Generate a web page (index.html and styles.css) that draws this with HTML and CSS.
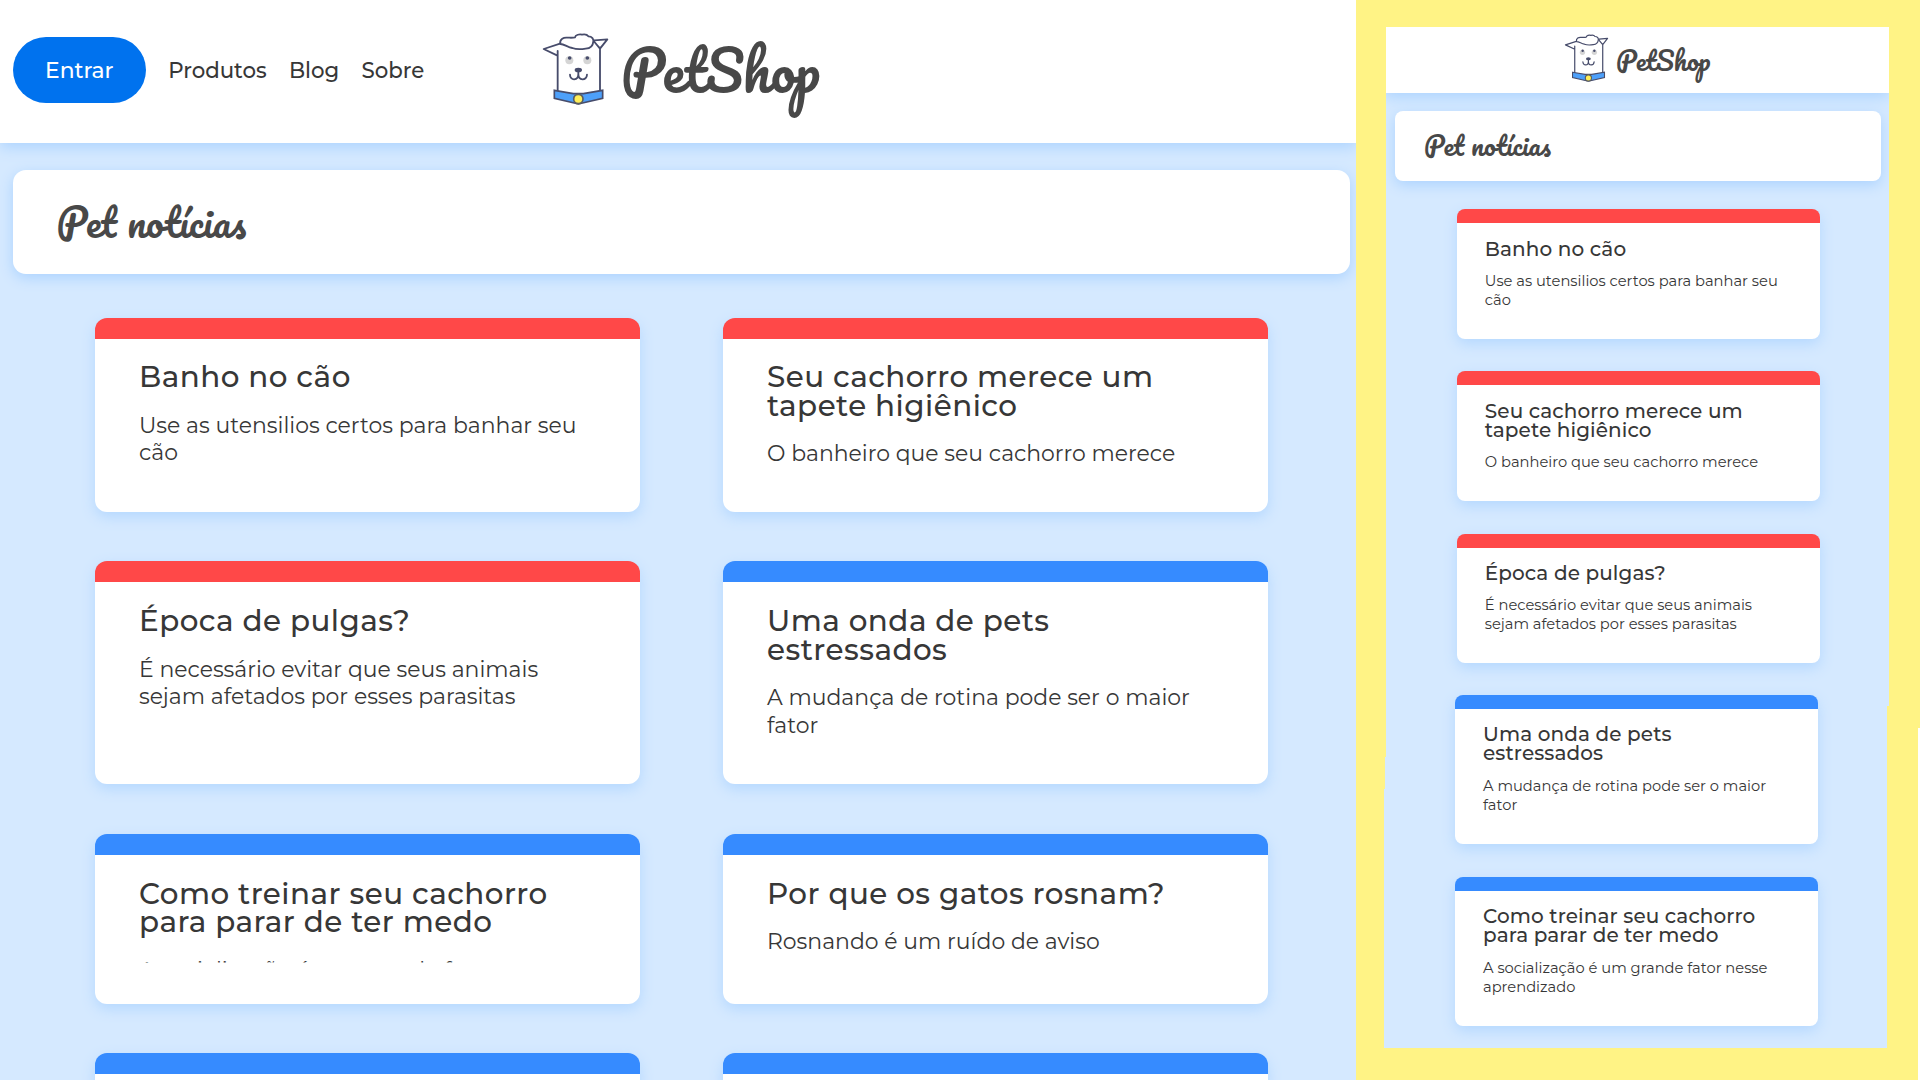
FILE: index.html
```html
<!DOCTYPE html>
<html lang="pt-BR">
<head>
<meta charset="utf-8">
<title>PetShop</title>
<link rel="stylesheet" href="styles.css">
</head>
<body>
<svg width="0" height="0" class="defs" aria-hidden="true">
  <symbol id="dog" viewBox="0 0 240 270">
    <g fill="none" stroke="#474c6b" stroke-width="5.5" stroke-linejoin="round" stroke-linecap="round">
      <path d="M53 78V198M180 67V198M60 56L11 72L51 91M163 46L202 43L180 71L161 48"/>
      <path fill="#fff" d="M61 57C58 41 72 37 82 38C90 38 99 39 105 37C106 30 119 26 126 29C136 27 143 31 145 34C157 34 161 43 160 49C159 62 151 70 137 71C124 73 107 73 97 69C83 67 73 57 61 57Z"/>
      <path d="M90 149C90 168 115 168 115 147C115 168 140 168 141 149M115 136V150"/>
    </g>
    <circle cx="88" cy="106" r="12" fill="#d5d5d5"/><circle cx="142" cy="106" r="12" fill="#d5d5d5"/>
    <circle cx="89" cy="99" r="5.5" fill="#474c6b"/><circle cx="142" cy="99" r="5.5" fill="#474c6b"/>
    <ellipse cx="115" cy="135" rx="11" ry="7" fill="#474c6b"/>
    <path d="M43 196L100 206H130L188 196V220L115 237L43 220Z" fill="#4da0fa" stroke="#474c6b" stroke-width="5" stroke-linejoin="miter"/>
    <circle cx="115" cy="222" r="14" fill="#ffee58" stroke="#5a5d60" stroke-width="5"/>
  </symbol>
</svg>
<div class="stage">
  <section class="desktop">
    <header class="top">
      <nav class="nav">
        <a class="enter">Entrar</a><a>Produtos</a><a>Blog</a><a>Sobre</a>
      </nav>
      <div class="brand"><svg class="dog"><use href="#dog"/></svg><span class="script">PetShop</span></div>
    </header>
    <h1 class="heading script">Pet notícias</h1>
    <main class="grid">
      <article class="card red"><div class="content"><h2>Banho no cão</h2><p>Use as utensilios certos para banhar seu<br>cão</p></div></article>
      <article class="card red"><div class="content"><h2>Seu cachorro merece um<br>tapete higiênico</h2><p>O banheiro que seu cachorro merece</p></div></article>
      <article class="card red"><div class="content"><h2>Época de pulgas?</h2><p>É necessário evitar que seus animais<br>sejam afetados por esses parasitas</p></div></article>
      <article class="card"><div class="content"><h2>Uma onda de pets<br>estressados</h2><p>A mudança de rotina pode ser o maior<br>fator</p></div></article>
      <article class="card"><div class="content"><h2>Como treinar seu cachorro<br>para parar de ter medo</h2><p>A socialização é um grande fator nesse<br>aprendizado</p></div></article>
      <article class="card"><div class="content"><h2>Por que os gatos rosnam?</h2><p>Rosnando é um ruído de aviso</p></div></article>
      <article class="card"></article>
      <article class="card"></article>
    </main>
  </section>
  <section class="mobile">
    <header class="top">
      <div class="brand"><svg class="dog"><use href="#dog"/></svg><span class="script">PetShop</span></div>
    </header>
    <h1 class="heading script">Pet notícias</h1>
    <main class="list">
      <article class="card red"><div class="content"><h2>Banho no cão</h2><p>Use as utensilios certos para banhar seu<br>cão</p></div></article>
      <article class="card red"><div class="content"><h2>Seu cachorro merece um<br>tapete higiênico</h2><p>O banheiro que seu cachorro merece</p></div></article>
      <article class="card red"><div class="content"><h2>Época de pulgas?</h2><p>É necessário evitar que seus animais<br>sejam afetados por esses parasitas</p></div></article>
      <article class="card tall first"><div class="content"><h2>Uma onda de pets<br>estressados</h2><p>A mudança de rotina pode ser o maior<br>fator</p></div></article>
      <article class="card tall"><div class="content"><h2>Como treinar seu cachorro<br>para parar de ter medo</h2><p>A socialização é um grande fator nesse<br>aprendizado</p></div></article>
    </main>
  </section>
  <div class="edge"></div>
</div>
</body>
</html>
```
FILE: styles.css
```css
* { box-sizing: border-box; margin: 0; padding: 0; }
html, body { height: 1080px; overflow: hidden; }
body { background: #fff385; font-family: Montserrat, Inter, sans-serif; color: #373737; }
.defs { display: block; height: 0; }
.stage { display: flex; width: 1920px; height: 1080px; overflow: hidden; }
.script { font-family: Pacifico, Lato, cursive; font-weight: 400; color: #484848; white-space: nowrap; }
.dog { display: block; flex: none; }
.top { background: #fff; box-shadow: 0 4px 14px #acd3ff; }
.heading { background: #fff; box-shadow: 0 4px 14px #acd3ff; }
.card { background: #fff; box-shadow: 0 5px 14px #b5d8ff; border-top: 21.3px solid #368bff; }
.card.red { border-top-color: #ff4848; }
.card h2 { font-weight: 500; white-space: nowrap; }
.card p { white-space: nowrap; }

.desktop { width: 1356px; height: 1080px; flex: none; background: #d5e9ff; overflow: hidden; }
.desktop .top { height: 143px; display: flex; align-items: flex-start; }
.nav { display: flex; align-items: center; margin: 36.5px 0 0 12.5px; height: 66px; width: 530px; font-size: 21.3px; font-weight: 500; }
.nav a + a { margin-left: 22.2px; }
.nav .enter { width: 133.5px; height: 66px; line-height: 66px; border-radius: 33px; background: #0072ee; color: #fff; text-align: center; font-size: 21.8px; }
.desktop .brand { display: flex; padding-top: 25px; margin-left: -2.5px; }
.desktop .dog { width: 80px; height: 90px; }
.desktop .brand .script { font-size: 54.8px; line-height: 64px; margin: 12.8px 0 0 1px; }
.desktop .heading { margin: 27px 6px 0 12.5px; height: 104px; border-radius: 13px; padding-left: 44px; font-size: 38.6px; line-height: 103px; }
.grid { display: grid; grid-template-columns: 544.5px 544.5px; grid-template-rows: 194.5px 223px 170px 170px; gap: 49.4px 83.5px; padding: 43.5px 0 0 95px; }
.desktop .card { border-radius: 12px; padding: 24.8px 0 41.3px 44px; }
.desktop .content { height: 100%; clip-path: inset(-12px 0 0 -4px); }
.desktop .card h2 { font-size: 29.4px; line-height: 28.6px; letter-spacing: .48px; }
.desktop .card p { font-size: 21.95px; line-height: 27.5px; margin-top: 20px; }

.mobile { width: 505px; height: 1021px; flex: none; margin: 27px 0 0 28px; background: #d5e9ff; overflow: hidden;
  clip-path: polygon(2px 0, 505px 0, 505px 679px, 503px 679px, 503px 1021px, 0 1021px, 0 762px, 1px 762px, 1px 730px, 2px 730px); }
.mobile .top { height: 66px; }
.mobile .brand { display: flex; padding: 1.8px 0 0 179px; }
.mobile .dog { width: 53px; height: 59.5px; }
.mobile .brand .script { font-size: 26px; line-height: 32px; margin: 15px 0 0 0; }
.mobile .heading { margin: 18px 8.5px 0 11px; height: 69.5px; border-radius: 8px; padding-left: 29px; font-size: 25.8px; line-height: 68px; }
.list { display: flex; flex-direction: column; gap: 32.7px; padding: 28.8px 0 0 72.8px; }
.mobile .card { width: 363.3px; height: 129.5px; border-top-width: 14.4px; border-radius: 8px; padding: 16.3px 0 20px 28px; flex: none; }
.mobile .card.tall { height: 149px; margin-left: -1.8px; }
.mobile .card.first { margin-top: -1px; }
.mobile .card h2 { font-size: 20px; line-height: 19.2px; letter-spacing: .1px; }
.mobile .card p { font-size: 14.7px; line-height: 19px; margin-top: 13.3px; }
.edge { width: 2px; margin: 728px 0 0 auto; background: #fff; }
```
